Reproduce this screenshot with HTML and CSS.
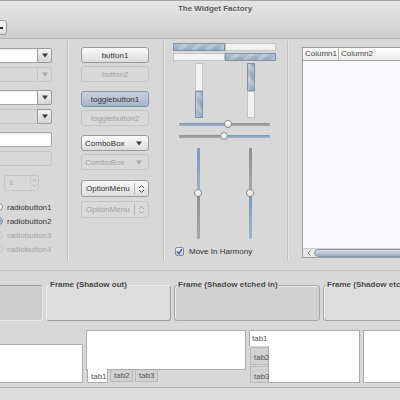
FILE: index.html
```html
<!DOCTYPE html>
<html lang="en">
<head>
    <meta charset="UTF-8">
    <meta name="viewport" content="width=device-width, initial-scale=1.0">
    <title>The Widget Factory</title>
    <link rel="stylesheet" href="styles.css">
</head>
<body>
<div class="window">
    <header class="header">
        <div class="title">The Widget Factory</div>
        <div class="toolbar">
            <button class="tool-btn"><span class="tool-mark"></span></button>
        </div>
    </header>

    <main class="main">
        <!-- entries column -->
        <section class="col col-entries">
            <div class="group">
                <div class="combo">
                    <div class="entry"></div>
                    <div class="combo-btn"><svg width="6" height="5" viewBox="0 0 6 5"><path d="M0 0.5H6L3 4.5Z" fill="#3a3a3a"/></svg></div>
                </div>
                <div class="combo disabled">
                    <div class="entry"></div>
                    <div class="combo-btn"><svg width="6" height="5" viewBox="0 0 6 5"><path d="M0 0.5H6L3 4.5Z" fill="#a8a8a8"/></svg></div>
                </div>
            </div>
            <div class="group">
                <div class="combo">
                    <div class="entry"></div>
                    <div class="combo-btn"><svg width="6" height="5" viewBox="0 0 6 5"><path d="M0 0.5H6L3 4.5Z" fill="#3a3a3a"/></svg></div>
                </div>
                <div class="combo half">
                    <div class="entry"></div>
                    <div class="combo-btn"><svg width="6" height="5" viewBox="0 0 6 5"><path d="M0 0.5H6L3 4.5Z" fill="#3a3a3a"/></svg></div>
                </div>
            </div>
            <div class="group">
                <div class="entry solo"></div>
                <div class="entry solo disabled"></div>
            </div>
            <div class="spin">
                <span class="spin-value">1</span>
                <span class="spin-arrows">
                    <svg width="5" height="10" viewBox="0 0 5 10"><path d="M0.5 3.5L2.5 1.5L4.5 3.5M0.5 6.5L2.5 8.5L4.5 6.5" fill="none" stroke="#b0b0b0"/></svg>
                </span>
            </div>
            <div class="radios">
                <div class="radio"><span class="dot"></span>radiobutton1</div>
                <div class="radio"><span class="dot checked"></span>radiobutton2</div>
                <div class="radio disabled"><span class="dot"></span>radiobutton3</div>
                <div class="radio disabled"><span class="dot"></span>radiobutton4</div>
            </div>
        </section>

        <div class="vsep"></div>

        <!-- buttons column -->
        <section class="col col-buttons">
            <div class="group">
                <button class="btn">button1</button>
                <button class="btn disabled">button2</button>
            </div>
            <div class="group">
                <button class="btn pressed">togglebutton1</button>
                <button class="btn disabled">togglebutton2</button>
            </div>
            <div class="group">
                <button class="btn combo-box">ComboBox<svg width="6" height="5" viewBox="0 0 6 5"><path d="M0 0.5H6L3 4.5Z" fill="#3a3a3a"/></svg></button>
                <button class="btn combo-box disabled">ComboBox<svg width="6" height="5" viewBox="0 0 6 5"><path d="M0 0.5H6L3 4.5Z" fill="#a8a8a8"/></svg></button>
            </div>
            <div class="group group-last">
                <button class="btn option-menu"><span class="om-text">OptionMenu</span><span class="om-arrows"><svg width="7" height="10" viewBox="0 0 7 10"><path d="M1 4L3.5 1.5L6 4M1 6L3.5 8.5L6 6" fill="none" stroke="#555"/></svg></span></button>
                <button class="btn option-menu disabled"><span class="om-text">OptionMenu</span><span class="om-arrows"><svg width="7" height="10" viewBox="0 0 7 10"><path d="M1 4L3.5 1.5L6 4M1 6L3.5 8.5L6 6" fill="none" stroke="#a8a8a8"/></svg></span></button>
            </div>
        </section>

        <div class="vsep"></div>

        <!-- ranges column -->
        <section class="col col-ranges">
            <div class="progress-h"><div class="bar-fill" style="width: 50%"></div><div class="bar-empty"></div></div>
            <div class="progress-h"><div class="bar-empty" style="width: 50%"></div><div class="bar-fill"></div></div>

            <div class="progress-v-row">
                <div class="progress-v"><div class="bar-empty" style="height: 50%"></div><div class="bar-fill"></div></div>
                <div class="progress-v"><div class="bar-fill" style="height: 50%"></div><div class="bar-empty"></div></div>
            </div>

            <div class="hscale"><div class="trough blue" style="width: 49px"></div><div class="knob"></div><div class="trough grey"></div></div>
            <div class="hscale"><div class="trough grey" style="width: 45px"></div><div class="knob"></div><div class="trough blue"></div></div>

            <div class="vscale-row">
                <div class="vscale"><div class="trough blue" style="height: 45px"></div><div class="knob"></div><div class="trough grey"></div></div>
                <div class="vscale"><div class="trough grey" style="height: 45px"></div><div class="knob"></div><div class="trough blue"></div></div>
            </div>

            <div class="check">
                <span class="check-box"><svg width="7" height="7" viewBox="0 0 7 7"><path d="M1 3.5L3 5.5L6 1" fill="none" stroke="#3d4f66" stroke-width="1.2"/></svg></span>
                Move In Harmony
            </div>
        </section>

        <div class="vsep"></div>

        <!-- tree column -->
        <section class="col col-tree">
            <div class="tree">
                <div class="tree-head">
                    <div class="tree-col first">Column1</div>
                    <div class="tree-col">Column2</div>
                </div>
                <div class="tree-body"></div>
                <div class="hscroll">
                    <svg class="scroll-arrow" width="4" height="6" viewBox="0 0 4 6"><path d="M3.5 0.5L1 3L3.5 5.5" fill="none" stroke="#8a8a8a"/></svg>
                    <div class="scroll-thumb"></div>
                </div>
            </div>
        </section>
    </main>

    <div class="frames">
        <fieldset class="frame shadow-in"><legend>Frame (Shadow in)</legend></fieldset>
        <fieldset class="frame shadow-out"><legend>Frame (Shadow out)</legend></fieldset>
        <fieldset class="frame etched-in"><legend>Frame (Shadow etched in)</legend></fieldset>
        <fieldset class="frame etched-out"><legend>Frame (Shadow etched out)</legend></fieldset>
    </div>

    <div class="notebooks">
        <div class="notebook nb-top">
            <div class="page"></div>
        </div>
        <div class="notebook nb-bottom">
            <div class="page"></div>
            <div class="tabs">
                <div class="tab active">tab1</div>
                <div class="tab">tab2</div>
                <div class="tab">tab3</div>
            </div>
        </div>
        <div class="notebook nb-left">
            <div class="tabs">
                <div class="tab active">tab1</div>
                <div class="tab">tab2</div>
                <div class="tab">tab3</div>
            </div>
            <div class="page"></div>
        </div>
        <div class="notebook nb-plain">
            <div class="page"></div>
        </div>
    </div>

    <div class="statusbar"></div>
</div>
</body>
</html>
```

FILE: styles.css
```css
* {
    box-sizing: border-box;
}

body {
    margin: 0;
    font-family: "Liberation Sans", Arial, sans-serif;
    font-size: 8px;
    color: #333;
}

.window {
    width: 400px;
    height: 400px;
    overflow: hidden;
    background-color: #d8d8d8;
}

/* title + toolbar */
.header {
    height: 39px;
    border-top: 1px solid #a6a6a6;
    border-bottom: 1px solid #b3b3b3;
    background: linear-gradient(#e6e6e6, #cecece);
}

.title {
    height: 19px;
    padding: 2px 0 0 30px;
    line-height: 12px;
    text-align: center;
    font-weight: bold;
    color: #575757;
    text-shadow: 0 1px 0 rgba(255, 255, 255, 0.6);
}

.tool-btn {
    display: flex;
    align-items: center;
    width: 30px;
    height: 15px;
    margin-left: -23px;
    padding: 0;
    border: 1px solid #9a9a9a;
    border-radius: 3px;
    background: linear-gradient(#fbfbfb, #dcdcdc);
}

.tool-mark {
    width: 3px;
    height: 2px;
    margin-left: 22px;
    background-color: #333;
}

/* main area */
.main {
    display: flex;
    height: 232px;
    padding-top: 8px;
    border-bottom: 1px solid #c3c3c3;
}

.col {
    flex: none;
}

.vsep {
    flex: none;
    width: 2px;
    margin: -6px 0 10px;
    border-left: 1px solid #c0c0c0;
    border-right: 1px solid #e9e9e9;
}

.group {
    display: flex;
    flex-direction: column;
    gap: 4px;
}

.group + .group {
    margin-top: 8px;
}

/* entries column */
.col-entries {
    width: 60px;
    margin: 1px 15px 0 -8px;
}

.combo {
    display: flex;
    height: 15px;
}

.entry {
    flex: 1;
    border: 1px solid #a4a4a4;
    border-right: none;
    background-color: #fff;
    box-shadow: inset 0 1px 1px rgba(0, 0, 0, 0.08);
}

.entry.solo {
    flex: none;
    height: 15px;
    border-right: 1px solid #a4a4a4;
    border-radius: 0 2px 2px 0;
}

.combo-btn {
    display: flex;
    align-items: center;
    justify-content: center;
    width: 15px;
    border: 1px solid #9a9a9a;
    border-radius: 0 2px 2px 0;
    background: linear-gradient(#f4f4f4, #d6d6d6);
}

.combo.disabled .entry,
.combo.half .entry,
.entry.solo.disabled {
    border-color: #c6c6c6;
    background-color: #d8d8d8;
    box-shadow: none;
}

.combo.disabled .combo-btn {
    border-color: #c6c6c6;
    background: #d9d9d9;
}

.spin {
    display: flex;
    width: 35px;
    height: 16px;
    margin: 9px 0 0 12px;
    border: 1px solid #c6c6c6;
    border-radius: 2px;
    color: #a6a6a6;
}

.spin-value {
    flex: 1;
    padding-left: 4px;
    line-height: 14px;
}

.spin-arrows {
    display: flex;
    align-items: center;
    justify-content: center;
    width: 8px;
    border-left: 1px solid #cdcdcd;
}

.radios {
    margin-top: 9px;
}

.radio {
    display: flex;
    align-items: center;
    gap: 4px;
    height: 14px;
    padding-left: 3px;
}

.radio .dot {
    width: 8px;
    height: 8px;
    border: 1px solid #8e8e8e;
    border-radius: 50%;
    background: linear-gradient(#fff, #e4e4e4);
}

.radio .dot.checked {
    border-color: #6f86a0;
    background: radial-gradient(circle, #6c819a 0 1.5px, #c3cfdc 2px);
}

.radio.disabled {
    color: #a6a6a6;
}

.radio.disabled .dot {
    border-color: #c4c4c4;
    background: #d9d9d9;
}

/* buttons column */
.col-buttons {
    width: 68px;
    margin: 0 14px 0 12px;
}

.col-buttons .group {
    gap: 3px;
}

.col-buttons .group + .group {
    margin-top: 9px;
}

.col-buttons .group-last {
    margin-top: 10px !important;
    gap: 4px;
}

.btn {
    display: flex;
    align-items: center;
    justify-content: center;
    height: 16px;
    padding: 0;
    border: 1px solid #9b9b9b;
    border-radius: 3px;
    background: linear-gradient(#fbfbfb, #dcdcdc);
    font: inherit;
    color: #333;
}

.btn.disabled {
    border-color: #c4c4c4;
    background: #d9d9d9;
    color: #a3a3a3;
}

.btn.pressed {
    border-color: #8394a7;
    background: linear-gradient(#c8d2de, #a8b7c7);
}

.btn.combo-box {
    justify-content: space-between;
    padding: 0 6px 0 3px;
}

.btn.option-menu {
    justify-content: space-between;
    height: 17px;
    padding-left: 4px;
}

.om-arrows {
    display: flex;
    align-items: center;
    justify-content: center;
    width: 14px;
    height: 11px;
    border-left: 1px solid #b4b4b4;
}

/* ranges column */
.col-ranges {
    width: 122px;
    margin-top: -4px;
}

.progress-h {
    display: flex;
    width: 103px;
    height: 8px;
    margin: 0 0 2px 8px;
}

.bar-fill {
    flex: 1;
    border: 1px solid #8193a8;
    background:
        repeating-linear-gradient(135deg, transparent 0 6px, rgba(255, 255, 255, 0.22) 6px 10px),
        linear-gradient(#b6c3d1, #93a6ba);
}

.bar-empty {
    flex: 1;
    border: 1px solid #c4c4c4;
    background-color: #f2f2f2;
}

.bar-fill[style],
.bar-empty[style] {
    flex: none;
}

.progress-v-row {
    display: flex;
    gap: 44px;
    margin: 0 0 0 30px;
}

.progress-v {
    display: flex;
    flex-direction: column;
    width: 8px;
    height: 55px;
}

.progress-v .bar-fill {
    background:
        repeating-linear-gradient(45deg, transparent 0 6px, rgba(255, 255, 255, 0.22) 6px 10px),
        linear-gradient(90deg, #b6c3d1, #93a6ba);
}

.hscale {
    display: flex;
    align-items: center;
    width: 91px;
    height: 12px;
    margin-left: 14px;
}

.hscale .trough {
    height: 3px;
}

.trough {
    flex: 1;
    border-radius: 1px;
}

.trough[style] {
    flex: none;
}

.trough.blue {
    background: linear-gradient(#7f96b1, #a3b5c8);
}

.trough.grey {
    background: linear-gradient(#8f8f8f, #a8a8a8);
}

.knob {
    z-index: 1;
    flex: none;
    width: 8px;
    height: 8px;
    margin: 0 -4px;
    border: 1px solid #8a8a8a;
    border-radius: 50%;
    background: linear-gradient(#fff, #e2e2e2);
}

.vscale-row {
    display: flex;
    gap: 44px;
    margin: 6px 0 0 29px;
}

.vscale {
    display: flex;
    flex-direction: column;
    align-items: center;
    width: 8px;
    height: 91px;
}

.vscale .trough {
    width: 3px;
}

.vscale .knob {
    margin: -4px 0;
}

.check {
    display: flex;
    align-items: center;
    gap: 5px;
    margin: 8px 0 0 10px;
}

.check-box {
    display: flex;
    align-items: center;
    justify-content: center;
    width: 9px;
    height: 9px;
    border: 1px solid #7a8ea6;
    border-radius: 2px;
    background: linear-gradient(#e4eaf1, #bccadb);
}

/* tree column */
.col-tree {
    margin-left: 13px;
}

.tree {
    display: flex;
    flex-direction: column;
    width: 120px;
    height: 211px;
    border: 1px solid #9c9c9c;
    background-color: #f8f8fa;
}

.tree-head {
    display: flex;
    height: 13px;
    border-bottom: 1px solid #a6a6a6;
    background: linear-gradient(#fdfdfd, #ececec);
    line-height: 12px;
}

.tree-col {
    flex: 1;
    padding-left: 2px;
    color: #444;
}

.tree-col.first {
    flex: none;
    width: 36px;
    border-right: 1px solid #b4b4b4;
}

.tree-body {
    flex: 1;
}

.hscroll {
    display: flex;
    align-items: center;
    height: 9px;
    border-top: 1px solid #cfcfcf;
    background-color: #e9e9e9;
}

.scroll-arrow {
    margin: 0 3px 0 4px;
}

.scroll-thumb {
    flex: 1;
    height: 8px;
    border: 1px solid #8a9aac;
    border-radius: 4px 0 0 4px;
    background: linear-gradient(#d3dce6, #9eafc2);
}

/* frames */
.frames {
    display: flex;
    gap: 3px;
    margin-top: 9px;
}

.frame {
    flex: none;
    min-width: 0;
    height: 41px;
    margin: 0;
    padding: 0;
    border: 1px solid #a9a9a9;
    border-radius: 3px;
}

.frame legend {
    margin-left: 2px;
    padding: 0 1px;
    line-height: 10px;
    font-weight: bold;
    color: #4a4a4a;
}

.shadow-in {
    width: 143px;
    margin-left: -100px;
    border-color: #9e9e9e #e6e6e6 #e6e6e6 #9e9e9e;
    background-color: #cecece;
}

.shadow-out {
    width: 125px;
    border-color: #f0f0f0 #a0a0a0 #a0a0a0 #f0f0f0;
    background-color: #dddddd;
}

.etched-in {
    width: 146px;
    border-color: #a6a6a6;
    background-color: #d1d1d1;
    box-shadow: inset 1px 1px 0 #ececec;
}

.etched-out {
    width: 130px;
    border-color: #a6a6a6;
    background-color: #dddddd;
    box-shadow: inset 1px 1px 0 #f4f4f4;
}

/* notebooks */
.notebooks {
    display: flex;
    gap: 3px;
    height: 53px;
    margin-top: 9px;
}

.notebook {
    flex: none;
    display: flex;
}

.page {
    flex: 1;
    border: 1px solid #ababab;
    background-color: #fff;
}

.tab {
    color: #555;
    border: 1px solid #b9b9b9;
    background-color: #d2d2d2;
}

.tab.active {
    border-color: #ababab;
    background-color: #fff;
}

.nb-top {
    width: 120px;
    margin-left: -37px;
    padding-top: 14px;
}

.nb-bottom {
    flex-direction: column;
    width: 160px;
}

.nb-bottom .page {
    flex: none;
    height: 39px;
    border-bottom: none;
}

.nb-bottom .tabs {
    display: flex;
    flex: 1;
    gap: 2px;
    padding-left: 1px;
    border-top: 1px solid #ababab;
}

.nb-bottom .tab {
    width: 23px;
    height: 12px;
    padding-left: 3px;
    line-height: 11px;
    border-top: none;
}

.nb-bottom .tab.active {
    width: 21px;
    height: 14px;
    margin-top: -1px;
    line-height: 15px;
}

.nb-left {
    width: 111px;
}

.nb-left .tabs {
    display: flex;
    flex-direction: column;
    gap: 1px;
    width: 20px;
    border-right: 1px solid #ababab;
}

.nb-left .tab {
    flex: 1;
    margin-left: 1px;
    padding: 5px 0 0 3px;
    border-right: none;
}

.nb-left .tab.active {
    flex: none;
    height: 16px;
    margin: 0 -1px 0 0;
    padding: 3px 0 0 2px;
    border-bottom: none;
}

.nb-left .page {
    border-left: none;
}

.nb-plain {
    width: 60px;
}

.statusbar {
    height: 20px;
    margin-top: 4px;
    border-top: 1px solid #adadad;
    background-color: #dcdcdc;
}
```
